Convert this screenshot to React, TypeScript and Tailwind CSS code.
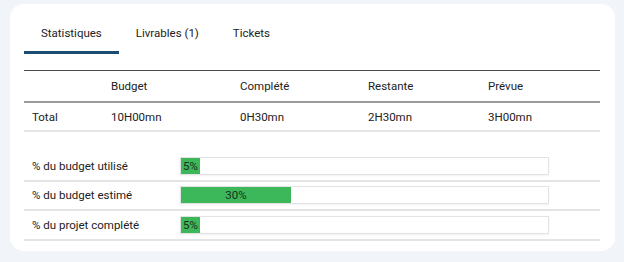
import { useState } from "react";

const tabs = ["Statistiques", "Livrables (1)", "Tickets"];

const bars = [
  { label: "% du budget utilisé", pct: 5 },
  { label: "% du budget estimé", pct: 30 },
  { label: "% du projet complété", pct: 5 },
];

export default function App() {
  const [tab, setTab] = useState(0);

  return (
    <div className="w-[624px] h-[262px] bg-[#f1f5f9] pt-[4px] pl-[10px] font-['Roboto',sans-serif] text-[11.5px] text-[#222]">
      <div className="w-[605px] h-[247px] bg-white rounded-[14px] pl-[14px] pr-[14px]">
        {/* Onglets */}
        <div className="flex h-[66px] pt-[18px]">
          {tabs.map((t, i) => (
            <button
              key={t}
              onClick={() => setTab(i)}
              className={`h-[32px] px-[17px] border-b-[3px] ${
                i === tab ? "border-[#1b4d72]" : "border-transparent"
              }`}
            >
              <span className="relative -top-[3px]">{t}</span>
            </button>
          ))}
        </div>

        {/* Tableau des heures */}
        <div className="w-[576px] border-t border-[#4a4a4a]">
          <div className="grid grid-cols-[79px_129px_128px_120px_1fr] h-[32px] items-center pt-[1px] border-b-2 border-[#9a9a9a]">
            <div />
            <div className="pl-2">Budget</div>
            <div className="pl-2">Complété</div>
            <div className="pl-2">Restante</div>
            <div className="pl-2">Prévue</div>
          </div>
          <div className="grid grid-cols-[79px_129px_128px_120px_1fr] h-[29px] items-center pt-[2px] border-b-2 border-[#e6e6e6]">
            <div className="pl-2">Total</div>
            <div className="pl-2">10H00mn</div>
            <div className="pl-2">0H30mn</div>
            <div className="pl-2">2H30mn</div>
            <div className="pl-2">3H00mn</div>
          </div>
        </div>

        {/* Barres de progression */}
        <div className="w-[576px] mt-[20px]">
          {bars.map((b) => (
            <div
              key={b.label}
              className="flex items-center h-[29.5px] border-b-2 border-[#e4e4e4]"
            >
              <div className="w-[156px] pl-2 mt-[1px]">{b.label}</div>
              <div className="w-[369px] h-[18px] border border-[#e3e3e3] shadow-[0_1px_2px_rgba(0,0,0,0.06)] bg-white">
                <div
                  className="h-full bg-[#3cb85a] text-[#1c2e1c] text-center leading-[16px] whitespace-nowrap"
                  style={{ width: `${b.pct}%`, minWidth: "19px" }}
                >
                  {b.pct}%
                </div>
              </div>
            </div>
          ))}
        </div>
      </div>
    </div>
  );
}
